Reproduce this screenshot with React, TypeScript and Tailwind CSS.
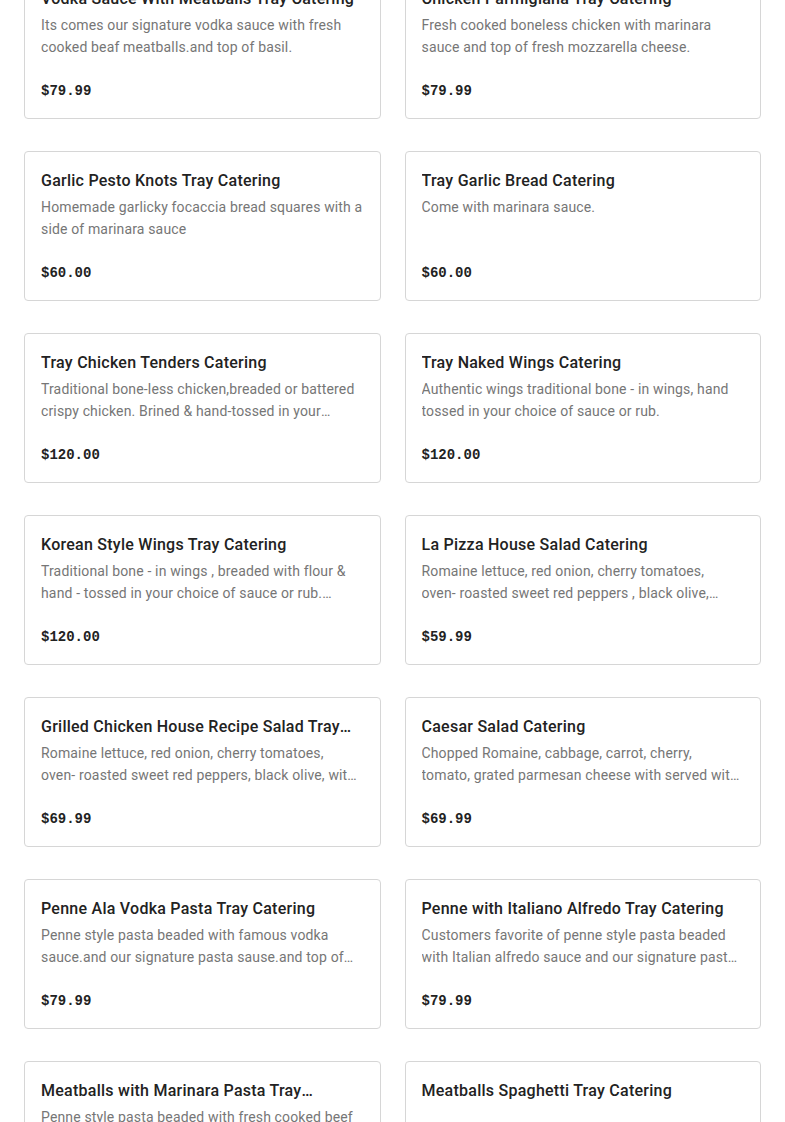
import type { ReactNode } from "react";

type Item = { name: string; desc: ReactNode; price: string };

const items: Item[] = [
  {
    name: "Vodka Sauce With Meatballs Tray Catering",
    desc: "Its comes our signature vodka sauce with fresh cooked beaf meatballs.and top of basil.",
    price: "$79.99",
  },
  {
    name: "Chicken Parmigiana Tray Catering",
    desc: "Fresh cooked boneless chicken with marinara sauce and top of fresh mozzarella cheese.",
    price: "$79.99",
  },
  {
    name: "Garlic Pesto Knots Tray Catering",
    desc: "Homemade garlicky focaccia bread squares with a side of marinara sauce",
    price: "$60.00",
  },
  {
    name: "Tray Garlic Bread Catering",
    desc: "Come with marinara sauce.",
    price: "$60.00",
  },
  {
    name: "Tray Chicken Tenders Catering",
    desc: "Traditional bone-less chicken,breaded or battered crispy chicken. Brined & hand-tossed in your choice of sauce or rub.",
    price: "$120.00",
  },
  {
    name: "Tray Naked Wings Catering",
    desc: "Authentic wings traditional bone - in wings, hand tossed in your choice of sauce or rub.",
    price: "$120.00",
  },
  {
    name: "Korean Style Wings Tray Catering",
    desc: "Traditional bone - in wings , breaded with flour & hand - tossed in your choice of sauce or rub. Served with celery and dressing.",
    price: "$120.00",
  },
  {
    name: "La Pizza House Salad Catering",
    desc: (
      <>
        Romaine lettuce, red onion, cherry tomatoes, <span className="whitespace-nowrap">oven- roasted</span> sweet red
        peppers , black olive, cucumber and mozzarella cheese.
      </>
    ),
    price: "$59.99",
  },
  {
    name: "Grilled Chicken House Recipe Salad Tray Catering",
    desc: (
      <>
        Romaine lettuce, red onion, cherry tomatoes, <span className="whitespace-nowrap">oven- roasted</span> sweet red
        peppers, black olive, with grilled chicken on top.
      </>
    ),
    price: "$69.99",
  },
  {
    name: "Caesar Salad Catering",
    desc: "Chopped Romaine, cabbage, carrot, cherry, tomato, grated parmesan cheese with served with croutons and caesar dressing.",
    price: "$69.99",
  },
  {
    name: "Penne Ala Vodka Pasta Tray Catering",
    desc: "Penne style pasta beaded with famous vodka sauce.and our signature pasta sause.and top of basil.",
    price: "$79.99",
  },
  {
    name: "Penne with Italiano Alfredo Tray Catering",
    desc: "Customers favorite of penne style pasta beaded with Italian alfredo sauce and our signature pasta sauce.",
    price: "$79.99",
  },
  {
    name: "Meatballs with Marinara Pasta Tray Catering",
    desc: "Penne style pasta beaded with fresh cooked beef meatballs and marinara sauce.",
    price: "$79.99",
  },
  {
    name: "Meatballs Spaghetti Tray Catering",
    desc: "",
    price: "$79.99",
  },
];

export default function App() {
  return (
    <div className="h-[1122px] overflow-hidden bg-white font-['Roboto',sans-serif]">
      {/* list is scrolled: first row partly off screen */}
      <div className="-mt-[31px] grid grid-cols-2 gap-x-6 gap-y-8 px-6">
        {items.map((item) => (
          <div
            key={item.name}
            className="flex h-[150px] flex-col rounded border border-[#d6d6d6] px-4 pt-[17px] pb-4"
          >
            <h3 className="line-clamp-1 text-base leading-6 font-medium tracking-[0.25px] text-[#222222]">
              {item.name}
            </h3>
            <p className="mt-[3px] line-clamp-2 h-[44px] text-sm leading-[22px] tracking-[0.15px] text-[#767676]">
              {item.desc}
            </p>
            <div className="mt-auto mb-px font-['Liberation_Mono',monospace] text-sm leading-5 font-bold text-[#222222]">
              {item.price}
            </div>
          </div>
        ))}
      </div>
    </div>
  );
}
